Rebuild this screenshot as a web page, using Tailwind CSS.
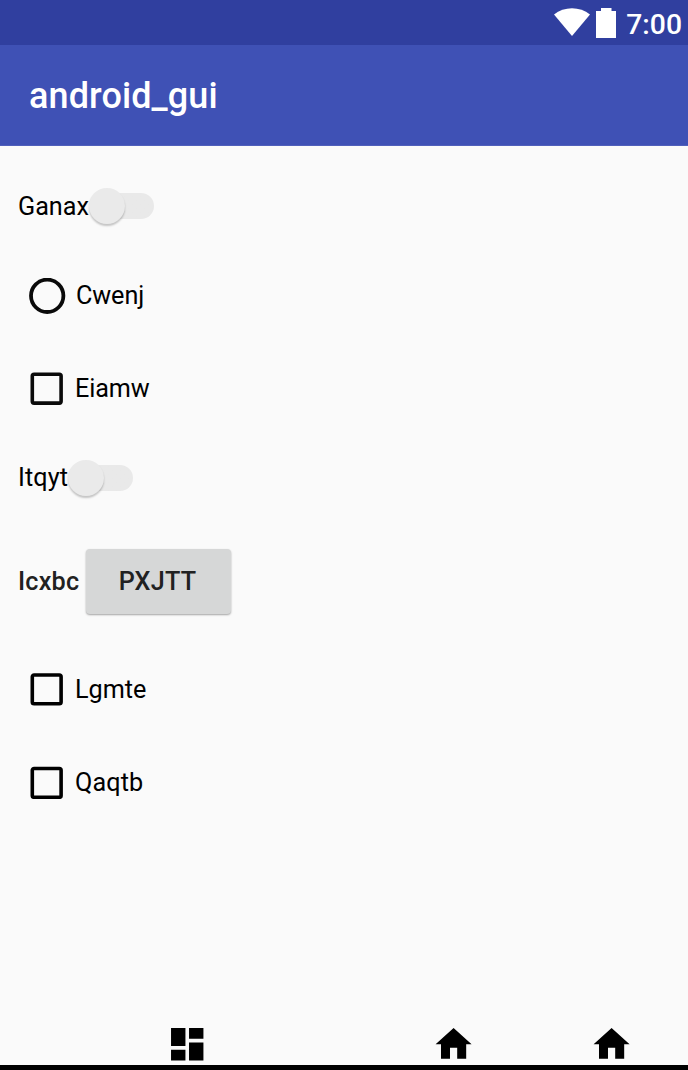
<!DOCTYPE html>
<html lang="en">
<head>
<meta charset="utf-8">
<title>android_gui</title>
<script src="https://cdn.jsdelivr.net/npm/@tailwindcss/browser@4"></script>
</head>
<body class="w-[688px] h-[1070px] overflow-hidden bg-[#fafafa] font-[Roboto,sans-serif] text-[25.2px] leading-[30px] text-black flex flex-col">
  <header class="shrink-0">
    <div class="h-[45px] bg-[#303f9f] flex justify-end pr-[6px] text-white">
      <svg class="w-[36px] h-[28px] mt-[8px]" viewBox="0 0 36 28"><path d="M0 6.500C10-1.800 26-1.800 36 6.500L18 28Z" fill="#fff"/></svg>
      <svg class="w-[20px] h-[30px] mt-[8px] ml-[6px]" viewBox="0 0 20 30"><path d="M5 0H15.500V3H20V30H0V3H5Z" fill="#fff"/></svg>
      <span class="text-[28.3px] leading-[34px] mt-[8px] ml-[10px] font-medium">7:00</span>
    </div>
    <div class="h-[101px] bg-[#3f51b5] border-b border-[#5060bb] flex items-center pl-[29px] pt-[2px] text-white text-[36px] leading-[42px] tracking-[0.1px] font-medium">android_gui</div>
  </header>
  <main class="grow flex flex-col">
    <div class="h-[120px] flex items-center pl-[18px]">
      <span class="w-[71px] pt-px">Ganax</span>
      <div class="w-[65px] h-[26px] flex items-center rounded-full bg-gradient-to-r from-transparent from-25% to-[#e9e9e9] to-25%"><div class="size-[36px] shrink-0 rounded-full bg-[#eaeaea] shadow-[0_2px_2px_rgba(0,0,0,0.22)]"></div></div>
    </div>
    <div class="h-[60px] flex items-center pl-[29px]">
      <svg class="size-[37px] mr-[10px]" viewBox="0 0 37 37"><circle cx="18.200" cy="17.800" r="16.200" fill="none" stroke="#0a0a0a" stroke-width="3.800"/></svg><span class="pb-px tracking-[-0.1px]">Cwenj</span>
    </div>
    <div class="h-[126px] flex items-center pl-[30px]">
      <svg class="size-[33px] mr-[12px] mb-[2px]" viewBox="0 0 33 33"><rect x="2.300" y="2.300" width="28.800" height="28.800" rx="1.800" fill="none" stroke="#0a0a0a" stroke-width="3.600"/></svg><span class="tracking-[-0.1px]">Eiamw</span>
    </div>
    <div class="h-[52px] flex items-center pl-[18px]">
      <span class="w-[50px] tracking-[0.1px]">Itqyt</span>
      <div class="w-[65px] h-[26px] flex items-center rounded-full bg-gradient-to-r from-transparent from-25% to-[#e9e9e9] to-25%"><div class="size-[36px] shrink-0 rounded-full bg-[#eaeaea] shadow-[0_2px_2px_rgba(0,0,0,0.22)]"></div></div>
    </div>
    <div class="h-[156px] flex items-center pl-[18px] font-medium text-[#212121]">
      <span class="w-[68px] tracking-[0.2px]">Icxbc</span>
      <button class="w-[145px] h-[65px] mb-[2px] pt-[1px] pr-[2px] rounded-[4px] bg-[#d6d7d7] shadow-[0_1px_2px_rgba(0,0,0,0.35)] font-medium tracking-[0.2px] text-[#212121]">PXJTT</button>
    </div>
    <div class="h-[60px] flex items-center pl-[30px]">
      <svg class="size-[33px] mr-[12px] mb-[2px]" viewBox="0 0 33 33"><rect x="2.300" y="2.000" width="28.800" height="28.800" rx="1.800" fill="none" stroke="#000" stroke-width="3.600"/></svg><span>Lgmte</span>
    </div>
    <div class="h-[126px] flex items-center pl-[30px]">
      <svg class="size-[33px] mr-[12px] mb-[2px]" viewBox="0 0 33 33"><rect x="2.300" y="2.500" width="28.800" height="28.800" rx="1.800" fill="none" stroke="#000" stroke-width="3.600"/></svg><span class="tracking-[0.1px]">Qaqtb</span>
    </div>
  </main>
  <nav class="h-[48px] shrink-0 flex items-start pt-px border-b-[5px] border-black">
    <svg class="w-[43.2px] h-[43.2px] shrink-0 ml-[165.6px]" viewBox="0.2 0.2 24 24"><path d="M3 13h8V3H3v10zm0 8h8v-6H3v6zm10 0h8V11h-8v10zm0-18v6h8V3h-8z"/></svg>
    <svg class="w-[43.2px] h-[43.2px] shrink-0 ml-[223px]" viewBox="0 0.2 24 24"><path d="M10 20v-6h4v6h5v-8h3L12 3 2 12h3v8z"/></svg>
    <svg class="w-[43.2px] h-[43.2px] shrink-0 ml-[115.300px]" viewBox="0 0.2 24 24"><path d="M10 20v-6h4v6h5v-8h3L12 3 2 12h3v8z"/></svg>
  </nav>
</body>
</html>
